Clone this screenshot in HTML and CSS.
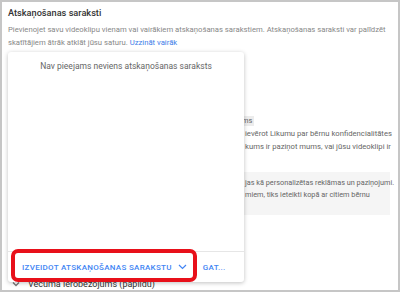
FILE: index.html
```html
<!DOCTYPE html>
<html lang="lv">
<head>
    <meta charset="UTF-8">
    <meta name="viewport" content="width=device-width, initial-scale=1.0">
    <title>Atskaņošanas saraksti</title>
    <link rel="stylesheet" href="styles.css">
</head>
<body>

    <div class="frame">
        <div class="section">
            <h2 class="title">Atskaņošanas saraksti</h2>
            <p class="desc">Pievienojet savu videoklipu vienam vai vairākiem atskaņošanas sarakstiem. Atskaņošanas saraksti var palīdzēt skatītājiem ātrāk atklāt jūsu saturu. <a href="#">Uzzināt vairāk</a></p>

            <!-- content behind the open picker, only the right part shows -->
            <div class="behind">
                <div class="chip-row"><span class="chip">ms</span></div>
                <p class="behind-text">ievērot Likumu par bērnu konfidencialitātes</p>
                <p class="behind-text">kums ir paziņot mums, vai jūsu videoklipi ir</p>
                <div class="note">
                    <p class="behind-text">jas kā personalizētas reklāmas un paziņojumi.</p>
                    <p class="behind-text">miem, tiks ieteikti kopā ar citiem bērnu</p>
                </div>
            </div>

            <div class="age">
                <svg class="chev" width="8" height="6" viewBox="0 0 8 6"><path d="M1 1.5 L4 4.5 L7 1.5" fill="none" stroke="#777" stroke-width="1.3"/></svg>
                <span>Vecuma ierobežojums (papildu)</span>
            </div>
        </div>

        <div class="picker">
            <div class="picker-body">
                <p class="empty">Nav pieejams neviens atskaņošanas saraksts</p>
            </div>
            <div class="picker-actions">
                <button class="btn">IZVEIDOT ATSKAŅOŠANAS SARAKSTU
                    <svg width="9" height="6" viewBox="0 0 9 6"><path d="M1 1 L4.5 4.5 L8 1" fill="none" stroke="#4285f4" stroke-width="1.2"/></svg>
                </button>
                <button class="btn">GAT...</button>
            </div>
        </div>

        <div class="highlight"></div>
    </div>

</body>
</html>
```

FILE: styles.css
```css
body {
    font-family: Roboto, Arial, sans-serif;
    margin: 0;
    padding: 0;
    background-color: #fff;
}
.frame {
    position: relative;
    width: 400px;
    height: 292px;
    box-sizing: border-box;
    border: 2px solid #c6c6c6;
    overflow: hidden;
}
.section {
    padding: 5px 6px 0;
}
.title {
    margin: 0;
    font-size: 9.2px;
    font-weight: 500;
    line-height: 12px;
    color: #333;
}
.desc {
    margin: 4px 0 0;
    font-size: 7.7px;
    line-height: 13px;
    color: #888;
}
.desc a {
    color: #3e7de8;
    text-decoration: none;
}
.behind {
    margin-top: 64px;
}
.chip-row {
    padding-left: 232px;
    line-height: 10px;
}
.chip {
    display: inline-block;
    background-color: #ececec;
    font-size: 7.4px;
    line-height: 10px;
    color: #666;
    padding: 0 2px;
}
.behind-text {
    margin: 0;
    padding-left: 237px;
    font-size: 7.7px;
    line-height: 13px;
    color: #666;
    white-space: nowrap;
}
.chip-row + .behind-text {
    margin-top: 1px;
}
.note {
    margin-top: 19px;
    margin-right: 2px;
    background-color: #f5f5f5;
    padding: 5px 0 14px;
}
.note .behind-text {
    font-size: 7.3px;
    line-height: 12px;
}
.age {
    display: flex;
    align-items: center;
    gap: 8px;
    margin-top: 63px;
    padding-left: 4px;
    font-size: 9px;
    line-height: 12px;
    color: #333;
}
.picker {
    position: absolute;
    left: 6px;
    top: 50px;
    width: 236px;
    height: 230px;
    display: flex;
    flex-direction: column;
    background-color: #fff;
    border-radius: 3px;
    box-shadow: 0 1px 4px rgba(0, 0, 0, 0.25);
}
.picker-body {
    flex: 1;
}
.empty {
    margin: 9px 0 0;
    text-align: center;
    font-size: 8.5px;
    color: #666;
}
.picker-actions {
    display: flex;
    align-items: center;
    gap: 10px;
    height: 30px;
    border-top: 1px solid #e6e6e6;
    padding-left: 11px;
}
.btn {
    display: flex;
    align-items: center;
    gap: 6px;
    border: none;
    background: none;
    padding: 0 3px;
    font-family: Roboto, Arial, sans-serif;
    font-size: 8px;
    font-weight: 500;
    color: #4285f4;
    letter-spacing: 0.3px;
}
.highlight {
    position: absolute;
    left: 9px;
    top: 247px;
    width: 186px;
    height: 33px;
    box-sizing: border-box;
    border: 4px solid #e8101a;
    border-radius: 7px;
}
```
